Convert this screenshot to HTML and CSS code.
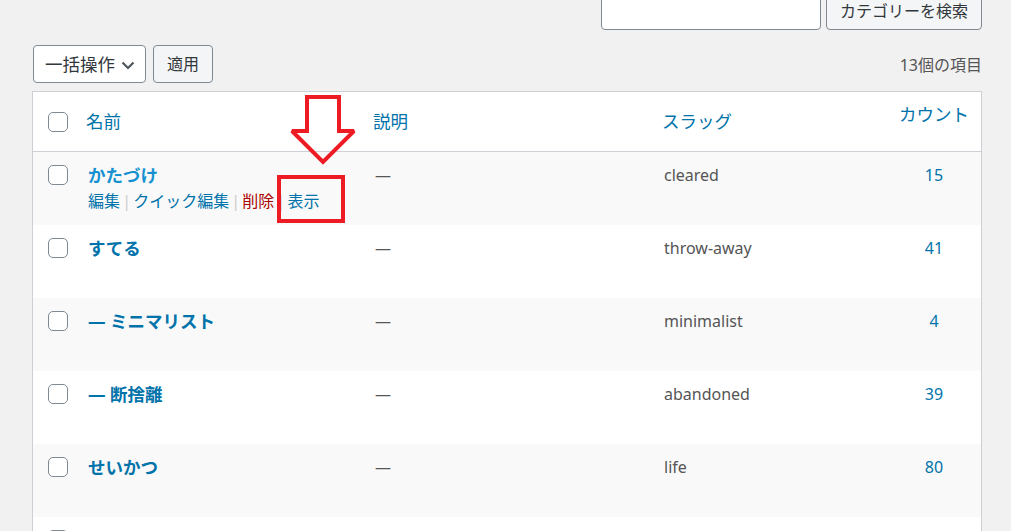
FILE: index.html
```html
<!DOCTYPE html>
<html lang="ja">
<head>
<meta charset="utf-8">
<title>カテゴリー</title>
<link rel="stylesheet" href="styles.css">
</head>
<body>
<div class="page">
  <form class="search-box">
    <input type="search" class="search-input" aria-label="カテゴリーを検索">
    <button type="button" class="btn">カテゴリーを検索</button>
  </form>

  <div class="tablenav">
    <div class="bulk">
      <div class="select">一括操作
        <svg class="chev" viewBox="0 0 14 9" width="14" height="9"><path d="M1.5 1.5 L7 7 L12.5 1.5" fill="none" stroke="#50575e" stroke-width="2.2"/></svg>
      </div>
      <button type="button" class="btn btn-apply">適用</button>
    </div>
    <div class="count-items">13個の項目</div>
  </div>

  <table class="list">
    <colgroup>
      <col class="c-check"><col class="c-name"><col class="c-desc"><col class="c-slug"><col class="c-count">
    </colgroup>
    <thead>
      <tr>
        <th class="check"><input type="checkbox" class="cb"></th>
        <th><a href="#">名前</a></th>
        <th><a href="#">説明</a></th>
        <th><a href="#">スラッグ</a></th>
        <th class="num num-head"><a href="#">カウント</a></th>
      </tr>
    </thead>
    <tbody>
      <tr class="alt">
        <td class="check"><input type="checkbox" class="cb"></td>
        <td class="name">
          <a href="#" class="row-title hover">かたづけ</a>
          <div class="row-actions"><a href="#">編集</a><span class="sep"> | </span><a href="#">クイック編集</a><span class="sep"> | </span><a href="#" class="delete">削除</a><span class="sep"> | </span><a href="#">表示</a></div>
        </td>
        <td>—</td>
        <td>cleared</td>
        <td class="num"><a href="#">15</a></td>
      </tr>
      <tr>
        <td class="check"><input type="checkbox" class="cb"></td>
        <td class="name">
          <a href="#" class="row-title">すてる</a>
          <div class="row-actions off"><a href="#">編集</a><span class="sep"> | </span><a href="#">クイック編集</a><span class="sep"> | </span><a href="#" class="delete">削除</a><span class="sep"> | </span><a href="#">表示</a></div>
        </td>
        <td>—</td>
        <td>throw-away</td>
        <td class="num"><a href="#">41</a></td>
      </tr>
      <tr class="alt">
        <td class="check"><input type="checkbox" class="cb"></td>
        <td class="name">
          <a href="#" class="row-title">— ミニマリスト</a>
          <div class="row-actions off"><a href="#">編集</a><span class="sep"> | </span><a href="#">クイック編集</a><span class="sep"> | </span><a href="#" class="delete">削除</a><span class="sep"> | </span><a href="#">表示</a></div>
        </td>
        <td>—</td>
        <td>minimalist</td>
        <td class="num"><a href="#">4</a></td>
      </tr>
      <tr>
        <td class="check"><input type="checkbox" class="cb"></td>
        <td class="name">
          <a href="#" class="row-title">— 断捨離</a>
          <div class="row-actions off"><a href="#">編集</a><span class="sep"> | </span><a href="#">クイック編集</a><span class="sep"> | </span><a href="#" class="delete">削除</a><span class="sep"> | </span><a href="#">表示</a></div>
        </td>
        <td>—</td>
        <td>abandoned</td>
        <td class="num"><a href="#">39</a></td>
      </tr>
      <tr class="alt">
        <td class="check"><input type="checkbox" class="cb"></td>
        <td class="name">
          <a href="#" class="row-title">せいかつ</a>
          <div class="row-actions off"><a href="#">編集</a><span class="sep"> | </span><a href="#">クイック編集</a><span class="sep"> | </span><a href="#" class="delete">削除</a><span class="sep"> | </span><a href="#">表示</a></div>
        </td>
        <td>—</td>
        <td>life</td>
        <td class="num"><a href="#">80</a></td>
      </tr>
      <tr>
        <td class="check"><input type="checkbox" class="cb"></td>
        <td></td>
        <td></td>
        <td></td>
        <td></td>
      </tr>
    </tbody>
  </table>

  <svg class="arrow" width="70" height="76" viewBox="0 0 70 76" aria-hidden="true">
    <polygon points="19,4 51,4 51,38 66,38 35,69 4,38 19,38" fill="none" stroke="#ed1c24" stroke-width="4" stroke-linejoin="miter" stroke-miterlimit="2.2"/>
  </svg>
  <div class="highlight"></div>
</div>
</body>
</html>
```

FILE: styles.css
```css
* { box-sizing: border-box; }

html, body {
  margin: 0;
  background: #f1f1f1;
}

body {
  font-family: "Noto Sans", "Noto Sans CJK JP", sans-serif;
  font-size: 16px;
  color: #555;
  overflow: hidden;
  height: 531px;
}

a { color: #0073aa; text-decoration: none; }

.page {
  display: flow-root;
  position: relative;
  padding: 0 29px 0 32px;
  width: 1011px;
}

.search-box {
  display: flex;
  justify-content: flex-end;
  gap: 5px;
  margin: -8px 0 0 0;
}

.search-input {
  width: 220px;
  height: 38px;
  margin: 0;
  border: 1px solid #7e8993;
  border-radius: 4px;
  background: #fff;
}

.btn {
  height: 38px;
  margin: 0;
  padding: 0 13px;
  border: 1px solid #7e8993;
  border-radius: 4px;
  background: #f3f5f6;
  color: #32373c;
  font-family: "Noto Sans", "Noto Sans CJK JP", sans-serif;
  font-size: 16px;
  line-height: 36px;
}

.search-box .btn { width: 156px; padding: 0; }

.tablenav {
  display: flex;
  justify-content: space-between;
  align-items: center;
  margin-top: 15px;
  height: 38px;
}

.bulk {
  display: flex;
  gap: 7px;
  padding-left: 1px;
}

.select {
  display: flex;
  align-items: center;
  width: 113px;
  height: 38px;
  padding: 0 0 0 11px;
  border: 1px solid #7e8993;
  border-radius: 4px;
  background: #fff;
  color: #32373c;
  font-size: 17.5px;
  line-height: 36px;
}

.chev { margin-left: 6px; margin-top: 2px; }

.btn-apply { width: 60px; padding: 0; }

.count-items {
  color: #555;
  line-height: 20px;
  padding-top: 1px;
}

.list {
  margin-top: 8px;
  width: 950px;
  table-layout: fixed;
  border-collapse: separate;
  border-spacing: 0;
  border: 1px solid #ccd0d4;
  background: #fff;
}

.c-check { width: 45px; }
.c-name { width: 287px; }
.c-desc { width: 289px; }
.c-slug { width: 233px; }

th, td {
  text-align: left;
  vertical-align: top;
  font-weight: normal;
}

thead th {
  padding: 19px 8px 20px;
  line-height: 20px;
  font-size: 17.5px;
  border-bottom: 1px solid #ccd0d4;
  white-space: nowrap;
}

thead th.check { padding: 20px 0 19px 15px; }
thead th.num-head { padding: 12px 0 27px; }

tbody td {
  padding: 13px 10px 13px;
  line-height: 20px;
  height: 73px;
}

tbody td.check { padding-left: 15px; }

.num { text-align: center; }
tbody td.num { padding-left: 0; padding-right: 0; }

tr.alt td { background: #f9f9f9; }

.cb {
  display: block;
  -webkit-appearance: none;
  appearance: none;
  width: 20px;
  height: 20px;
  margin: 0;
  border: 1px solid #7e8993;
  border-radius: 5px;
  background: #fff;
}

.row-title {
  display: block;
  font-size: 17.5px;
  font-weight: 700;
  line-height: 20px;
  color: #0073aa;
  white-space: nowrap;
}

.row-title.hover { color: #1590d0; }

.row-actions {
  margin-top: 5px;
  line-height: 22px;
  font-size: 16px;
  white-space: nowrap;
}

.row-actions.off { visibility: hidden; }

.row-actions .sep { color: #ccc; word-spacing: -2px; }
.row-actions .delete { color: #a00; }

.arrow {
  position: absolute;
  left: 288px;
  top: 93px;
}

.highlight {
  position: absolute;
  left: 277px;
  top: 175px;
  width: 68px;
  height: 48px;
  border: 4px solid #ed1c24;
}
```
